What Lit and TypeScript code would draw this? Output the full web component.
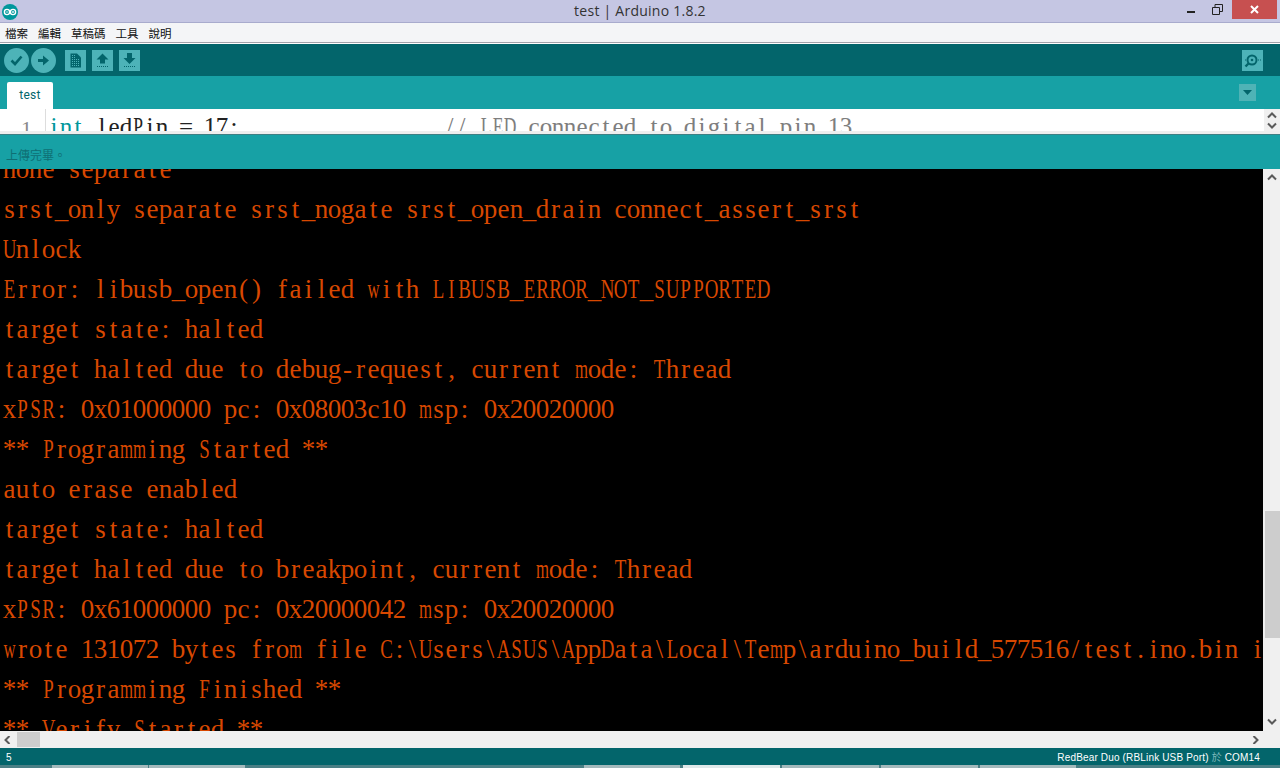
import { LitElement, html, css, svg } from "lit";
import { customElement } from "lit/decorators.js";

const LINES = [
  "none separate",
  "srst_only separate srst_nogate srst_open_drain connect_assert_srst",
  "Unlock",
  "Error: libusb_open() failed with LIBUSB_ERROR_NOT_SUPPORTED",
  "target state: halted",
  "target halted due to debug-request, current mode: Thread",
  "xPSR: 0x01000000 pc: 0x08003c10 msp: 0x20020000",
  "** Programming Started **",
  "auto erase enabled",
  "target state: halted",
  "target halted due to breakpoint, current mode: Thread",
  "xPSR: 0x61000000 pc: 0x20000042 msp: 0x20020000",
  "wrote 131072 bytes from file C:\\Users\\ASUS\\AppData\\Local\\Temp\\arduino_build_577516/test.ino.bin i",
  "** Programming Finished **",
  "** Verify Started **",
];

const MENUS = ["檔案", "編輯", "草稿碼", "工具", "說明"];

const TASKBAR = [
  { w: 52, k: "" },
  { w: 96, k: "on" },
  { w: 1, k: "" },
  { w: 96, k: "on" },
  { w: 339, k: "" },
  { w: 96, k: "on" },
  { w: 3, k: "" },
  { w: 97, k: "hi" },
  { w: 2, k: "" },
  { w: 97, k: "on" },
  { w: 2, k: "" },
  { w: 97, k: "on" },
  { w: 2, k: "" },
  { w: 96, k: "on" },
];

function cells(text: string) {
  return [...text].map((c) => {
    const cls = /[mwMW]/.test(c) ? "c n2" : /[A-Z]/.test(c) ? "c n1" : "c";
    return html`<span class=${cls}>${c}</span>`;
  });
}

const chevron = (d: string) => svg`<svg class="chev" width="10" height="8" viewBox="0 0 10 8"><path d=${d} fill="none" stroke="#5a5a5a" stroke-width="2"/></svg>`;
const UP = "M1 6.5 L5 2.5 L9 6.5";
const DOWN = "M1 1.5 L5 5.5 L9 1.5";
const LEFT = "M6.5 0 L2.5 4 L6.5 8";
const RIGHT = "M3.5 0 L7.5 4 L3.5 8";

@customElement("app-root")
export class AppRoot extends LitElement {
  static styles = css`
    :host { display: block; width: 1280px; height: 768px; overflow: hidden; background: #000; font-family: "Liberation Sans", sans-serif; }
    .title { height: 22px; border-bottom: 1px solid #a8abcd; background: #c5c6e3; display: grid; grid-template-columns: 1fr auto 1fr; align-items: center; }
    .logo { margin: 1px 0 0 2px; display: block; }
    .title-text { font: 14px "Open Sans", sans-serif; letter-spacing: .25px; color: #333; margin-top: -1px; }
    .win { display: flex; justify-content: flex-end; align-items: flex-start; height: 22px; padding-right: 3px; }
    .win .min { width: 8px; height: 2px; background: #222; margin: 11px 17px 0 0; }
    .win .rest { margin: 4px 9px 0 0; display: block; }
    .win .close { width: 45px; height: 19px; background: #c75050; display: flex; align-items: center; justify-content: center; }
    .menu { height: 19px; background: #f4f5f7; border-bottom: 1px solid #a3a3ab; display: flex; gap: 10px; padding-left: 5px; align-items: center; font: 11.5px "Noto Sans CJK TC", sans-serif; color: #111; }
    .gap { height: 1px; background: #fff; }
    .toolbar { height: 32px; background: #03656b; display: flex; align-items: center; padding-left: 4px; }
    .round { width: 25px; height: 25px; border-radius: 50%; background: #4db3b8; margin-right: 2px; display: flex; align-items: center; justify-content: center; }
    .sq { width: 21px; height: 21px; background: #4db3b8; margin-right: 6px; display: block; }
    .sq.first { margin-left: 7px; }
    .spacer { flex: 1; }
    .sq.mon { margin-right: 17px; }
    .tabs { height: 33px; background: #17a1a5; display: flex; padding-left: 7px; position: relative; }
    .tab { margin-top: 6px; width: 46px; height: 27px; background: #fff; border-radius: 2px 2px 0 0; text-align: center; font: 12px/26px "Roboto", sans-serif; letter-spacing: .3px; color: #03656b; }
    .tabbtn { margin: 8px 24px 0 auto; width: 17px; height: 17px; background: #4fb3b6; display: flex; align-items: center; justify-content: center; }
    .editor { height: 22px; background: #fff; display: flex; overflow: hidden; }
    .gutter { width: 45px; border-right: 1px solid #ddd; box-sizing: content-box; font: 22px/22px "Liberation Serif", serif; color: #8a8a8a; text-align: right; padding-right: 0; flex: none; }
    .gutter span { display: block; margin: 9px 13px 0 0; }
    .code { flex: 1; padding: 5px 0 0 2px; white-space: pre; font: 25px/26px "Liberation Serif", serif; color: #222; --cell: 12px; overflow: hidden; }
    .kw { color: #00979c; }
    .cm { color: #7e7e7e; }
    .vbar-s { width: 16px; flex: none; background: #f0f0f0; display: flex; flex-direction: column; align-items: center; justify-content: space-around; }
    .chev { display: block; }
    .sep { height: 3px; background: #eee; border-bottom: 1px solid #3f7f84; box-sizing: content-box; }
    .msg { height: 34px; box-sizing: border-box; background: #17a1a5; font: 12px/18px "Noto Sans CJK TC", sans-serif; color: #0f6f74; padding: 11px 0 0 6px; }
    .mid { height: 562px; display: flex; background: #000; }
    .console { flex: 1; overflow: hidden; font: 27px/40px "Liberation Serif", serif; color: #d84800; --cell: 13px; padding-left: 3px; }
    .console .l { white-space: pre; height: 40px; }
    .console .inner { margin-top: -20px; }
    .c { display: inline-flex; justify-content: center; width: var(--cell); }
    .n1 { transform: scaleX(.7); }
    .n2 { transform: scaleX(.62); }
    .vbar { width: 17px; flex: none; background: #f0f0f0; display: flex; flex-direction: column; align-items: center; padding-top: 4px; box-sizing: border-box; }
    .thumbv { width: 15px; height: 127px; background: #cdcdcd; margin-top: 330px; margin-left: 1px; }
    .vbar .down { margin-top: auto; margin-bottom: 5px; }
    .hbar { height: 17px; background: #f0f0f0; display: flex; align-items: center; padding: 0 20px 0 3px; }
    .thumbh { width: 23px; height: 15px; background: #cdcdcd; margin-left: 4px; }
    .hbar .r { margin-left: auto; }
    .status { height: 17px; background: #03656b; color: #fff; display: flex; justify-content: space-between; font: 10px/20px "Liberation Sans", "Noto Sans CJK TC", sans-serif; padding: 0 20px 0 6px; }
    .status .board { letter-spacing: .16px; }
    .status .yu { color: #7fb9bc; }
    .strip { height: 3px; display: flex; background: #4a7f85; }
    .strip .on { background: #a4b9bc; }
    .strip .hi { background: #dfe8e9; }
  `;

  render() {
    return html`
      <div class="title">
        <svg class="logo" width="16" height="16" viewBox="0 0 16 16">
          <circle cx="8" cy="8" r="8" fill="#00979c"/>
          <circle cx="5" cy="8" r="2.6" fill="none" stroke="#fff" stroke-width="1.4"/>
          <circle cx="11" cy="8" r="2.6" fill="none" stroke="#fff" stroke-width="1.4"/>
          <path d="M4 8h2M10 8h2M11 7v2" stroke="#fff" stroke-width=".8"/>
        </svg>
        <div class="title-text">test | Arduino 1.8.2</div>
        <div class="win">
          <div class="min"></div>
          <svg class="rest" width="11" height="11" viewBox="0 0 11 11">
            <path d="M.5 3.5h7v7h-7zM3 3V.5h7.5v7H8" fill="none" stroke="#222" stroke-width="1"/>
          </svg>
          <div class="close">
            <svg width="9" height="9" viewBox="0 0 9 9"><path d="M1 1l7 7M8 1l-7 7" stroke="#fff" stroke-width="2"/></svg>
          </div>
        </div>
      </div>
      <div class="menu">${MENUS.map((m) => html`<span>${m}</span>`)}</div>
      <div class="gap"></div>
      <div class="toolbar">
        <div class="round"><svg width="13" height="11" viewBox="0 0 13 11"><path d="M1.5 5.5l3.5 3.5 6.5-7.5" fill="none" stroke="#03656b" stroke-width="2.6"/></svg></div>
        <div class="round"><svg width="13" height="13" viewBox="0 0 13 13"><path d="M1 5h5V1.5l6 5-6 5V8H1z" fill="#03656b"/></svg></div>
        <svg class="sq first" viewBox="0 0 21 21">
          <path d="M5.5 3.5h6.500l4 4v10h-10.500z" fill="#03656b"/>
          <path d="M7 9.500h1M9 9.500h1M11 9.500h1M13 9.500h1M7 11.500h1M9 11.500h1M11 11.500h1M13 11.500h1M7 13.500h1M9 13.500h1M11 13.500h1M13 13.500h1M7 15.500h1M9 15.500h1M11 15.500h1M13 15.500h1M7 7.500h1M9 7.500h1M7 5.500h1M9 5.500h1" stroke="#4db3b8" stroke-width="1"/>
        </svg>
        <svg class="sq" viewBox="0 0 21 21">
          <path d="M10.500 3.500l6 6h-3.500v4h-5v-4h-3.500z" fill="#03656b"/>
          <path d="M5 16.500h11" stroke="#03656b" stroke-dasharray="1 1"/>
        </svg>
        <svg class="sq" viewBox="0 0 21 21">
          <path d="M8 3h5v5h3.500l-6 6-6-6h3.500z" fill="#03656b"/>
          <path d="M5 16.500h11" stroke="#03656b" stroke-dasharray="1 1"/>
        </svg>
        <div class="spacer"></div>
        <svg class="sq mon" viewBox="0 0 21 21">
          <circle cx="10" cy="10" r="4.500" fill="none" stroke="#03656b" stroke-width="2"/>
          <circle cx="10" cy="10" r="1.300" fill="#03656b"/>
          <path d="M6.500 13.500l-3 3" stroke="#03656b" stroke-width="2.400"/>
          <path d="M3 10h1M16 10h1M18 10h1" stroke="#03656b"/>
        </svg>
      </div>
      <div class="tabs">
        <div class="tab">test</div>
        <div class="tabbtn"><svg width="9" height="5" viewBox="0 0 9 5"><path d="M0 0h9L4.500 5z" fill="#03656b"/></svg></div>
      </div>
      <div class="editor">
        <div class="gutter"><span>1</span></div>
        <div class="code"><span class="kw">${cells("int")}</span>${cells(" ledPin = 17;" + " ".repeat(17))}<span class="cm">${cells("// LED connected to digital pin 13")}</span></div>
        <div class="vbar-s">${chevron(UP)}${chevron(DOWN)}</div>
      </div>
      <div class="sep"></div>
      <div class="msg">上傳完畢。</div>
      <div class="mid">
        <div class="console"><div class="inner">${LINES.map((l) => html`<div class="l">${cells(l)}</div>`)}</div></div>
        <div class="vbar">
          ${chevron(UP)}
          <div class="thumbv"></div>
          <div class="down">${chevron(DOWN)}</div>
        </div>
      </div>
      <div class="hbar">
        ${chevron(LEFT)}
        <div class="thumbh"></div>
        <div class="r">${chevron(RIGHT)}</div>
      </div>
      <div class="status">
        <span>5</span>
        <span class="board">RedBear Duo (RBLink USB Port) <span class="yu">於</span> COM14</span>
      </div>
      <div class="strip">${TASKBAR.map((t) => html`<div class=${t.k} style="width:${t.w}px"></div>`)}</div>
    `;
  }
}
